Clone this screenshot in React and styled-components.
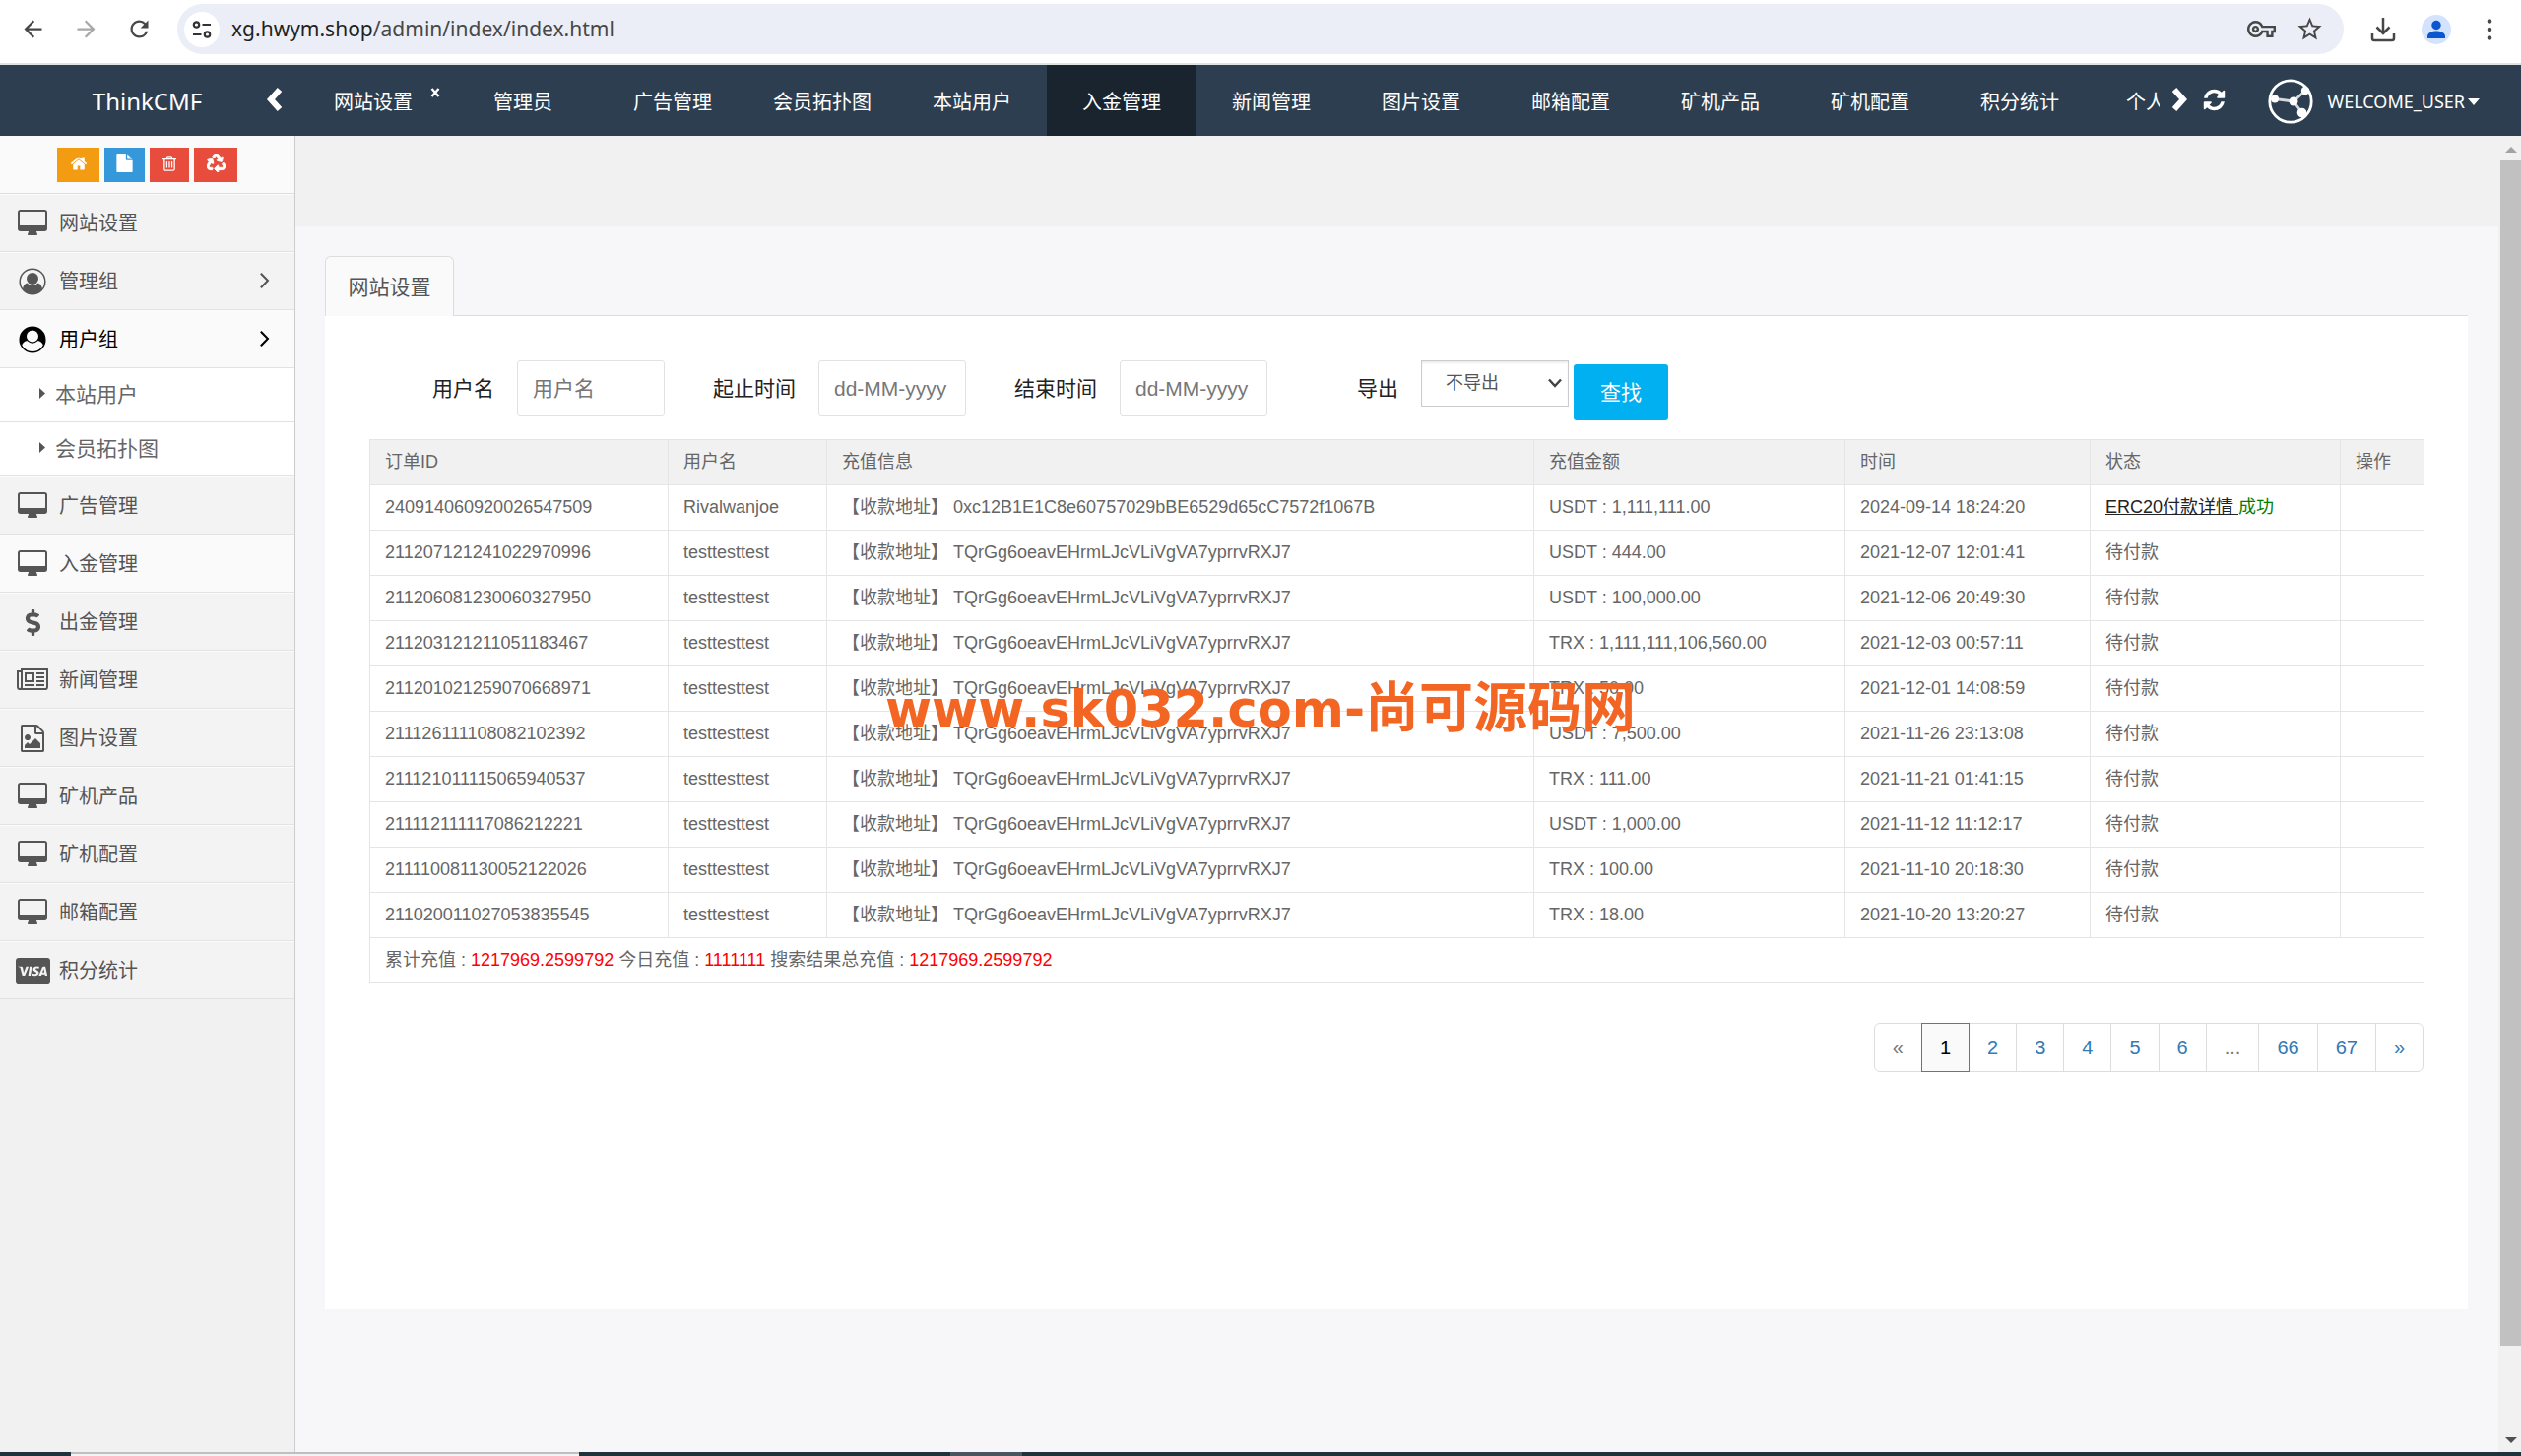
import styled, { createGlobalStyle } from "styled-components";
import { FaCcVisa, FaDollarSign, FaRecycle } from "react-icons/fa";
import { MdArrowBack, MdArrowForward, MdOutlineVpnKey, MdRefresh, MdStarBorder } from "react-icons/md";

const glyphs = {
  desktop: [
    "0 0 2048 1792",
    "M1856 992v-832q0-13-9.5-22.5t-22.5-9.5h-1600q-13 0-22.5 9.5t-9.5 22.5v832q0 13 9.5 22.5t22.5 9.5h1600q13 0 22.5-9.5t9.5-22.5zm128-832v1088q0 66-47 113t-113 47h-544q0 37 16 77.5t32 71 16 43.5q0 26-19 45t-45 19h-512q-26 0-45-19t-19-45q0-14 16-44t32-70 16-78h-544q-66 0-113-47t-47-113v-1088q0-66 47-113t113-47h1600q66 0 113 47t47 113z",
  ],
  home: [
    "0 0 1792 1792",
    "M1472 992v480q0 26-19 45t-45 19h-384v-384h-256v384h-384q-26 0-45-19t-19-45v-480q0-1 .5-3t.5-3l575-474 575 474q1 2 1 6zm223-69l-62 74q-8 9-21 11h-3q-13 0-21-7l-692-577-692 577q-12 8-24 7-13-2-21-11l-62-74q-8-10-7-23.5t11-21.5l719-599q32-26 76-26t76 26l244 204v-195q0-14 9-23t23-9h192q14 0 23 9t9 23v408l219 182q10 8 11 21.5t-7 23.5z",
  ],
  file: [
    "0 0 1792 1792",
    "M1152 512v-472q22 14 36 28l408 408q14 14 28 36h-472zm-128 32q0 40 28 68t68 28h544v1056q0 40-28 68t-68 28h-1344q-40 0-68-28t-28-68v-1600q0-40 28-68t68-28h800v544z",
  ],
  trash: [
    "0 0 1792 1792",
    "M704 736v576q0 14-9 23t-23 9h-64q-14 0-23-9t-9-23v-576q0-14 9-23t23-9h64q14 0 23 9t9 23zm256 0v576q0 14-9 23t-23 9h-64q-14 0-23-9t-9-23v-576q0-14 9-23t23-9h64q14 0 23 9t9 23zm256 0v576q0 14-9 23t-23 9h-64q-14 0-23-9t-9-23v-576q0-14 9-23t23-9h64q14 0 23 9t9 23zm128 724v-948h-896v948q0 22 7 40.5t14.5 27 10.5 8.5h832q3 0 10.5-8.5t14.5-27 7-40.5zm-672-1076h448l-48-117q-7-9-17-11h-317q-10 2-17 11zm928 32v64q0 14-9 23t-23 9h-96v948q0 83-47 143.5t-113 60.5h-832q-66 0-113-58.5t-47-141.5v-952h-96q-14 0-23-9t-9-23v-64q0-14 9-23t23-9h309l70-167q15-37 54-63t79-26h320q40 0 79 26t54 63l70 167h309q14 0 23 9t9 23z",
  ],
  refresh: [
    "0 0 1792 1792",
    "M1639 1056q0 5-1 7-64 268-268 434.5t-478 166.5q-146 0-282.5-55t-243.5-157l-129 129q-19 19-45 19t-45-19-19-45v-448q0-26 19-45t45-19h448q26 0 45 19t19 45-19 45l-137 137q71 66 161 102t187 36q134 0 250-65t186-179q11-17 53-117 8-23 30-23h192q13 0 22.5 9.5t9.5 22.5zm25-800v448q0 26-19 45t-45 19h-448q-26 0-45-19t-19-45 19-45l138-138q-148-137-349-137-134 0-250 65t-186 179q-11 17-53 117-8 23-30 23h-199q-13 0-22.5-9.5t-9.5-22.5v-7q65-268 270-434.5t480-166.5q146 0 284 55.5t245 156.5l130-129q19-19 45-19t45 19 19 45z",
  ],
  news: [
    "0 0 2048 1792",
    "M1024 512h-384v384h384v-384zm128 640v128h-640v-128h640zm0-768v640h-640v-640h640zm640 768v128h-512v-128h512zm0-256v128h-512v-128h512zm0-256v128h-512v-128h512zm0-256v128h-512v-128h512zm-1536 960v-960h-128v960q0 26 19 45t45 19 45-19 19-45zm1664 0v-1088h-1536v1088q0 33-11 64h1483q26 0 45-19t19-45zm128-1216v1216q0 80-56 136t-136 56h-1664q-80 0-136-56t-56-136v-1088h256v-128h1792z",
  ],
  image: [
    "0 0 1792 1792",
    "M1596 380q28 28 48 76t20 88v1152q0 40-28 68t-68 28h-1344q-40 0-68-28t-28-68v-1600q0-40 28-68t68-28h896q40 0 88 20t76 48zm-444-244v376h376q-10-29-22-41l-313-313q-12-12-41-22zm384 1528v-1024h-416q-40 0-68-28t-28-68v-416h-768v1536h1280zm-128-448v320h-1024v-192l192-192 128 128 384-384zm-832-192q-80 0-136-56t-56-136 56-136 136-56 136 56 56 136-56 136-136 56z",
  ],
  angle: [
    "0 0 1792 1792",
    "M1171 960q0 13-10 23l-466 466q-10 10-23 10t-23-10l-50-50q-10-10-10-23t10-23l393-393-393-393q-10-10-10-23t10-23l50-50q10-10 23-10t23 10l466 466q10 10 10 23z",
  ],
};

function Glyph({ name, size = 28 }) {
  const [box, d] = glyphs[name];
  return (
    <svg viewBox={box} height={size} fill="currentColor" aria-hidden="true">
      <path d={d} />
    </svg>
  );
}

function UserCircle({ solid }) {
  return (
    <svg viewBox="0 0 28 28" height="28" aria-hidden="true">
      {solid ? (
        <>
          <circle cx="14" cy="14" r="12.8" fill="currentColor" />
          <path d="M3 20C4 17 6 15.5 9 15h10c3 .5 5 2 6 5A12.5 12.5 0 0 1 3 20z" fill="#fafafa" />
          <circle cx="14" cy="10.5" r="6.6" fill="#fafafa" stroke="currentColor" strokeWidth="1.2" />
        </>
      ) : (
        <>
          <circle cx="14" cy="11" r="6" fill="currentColor" />
          <path d="M4 21.5c.5-3.5 2-5.5 4.5-6 1.5 1.6 3.3 2.5 5.5 2.5s4-.9 5.5-2.5c2.5.5 4 2.5 4.5 6A12 12 0 0 1 4 21.5z" fill="currentColor" />
        </>
      )}
      <circle cx="14" cy="14" r="12.8" fill="none" stroke="currentColor" strokeWidth="1.5" />
    </svg>
  );
}

function Chevron({ right }) {
  return (
    <svg viewBox="0 0 18 26" height="26" aria-hidden="true">
      <path d={right ? "M3 3l9 10-9 10" : "M15 3L6 13l9 10"} fill="none" stroke="#fff" strokeWidth="6" />
    </svg>
  );
}

const tabs = ["网站设置", "管理员", "广告管理", "会员拓扑图", "本站用户", "入金管理", "新闻管理", "图片设置", "邮箱配置", "矿机产品", "矿机配置", "积分统计"];

const menu = [
  { label: "网站设置", icon: <Glyph name="desktop" /> },
  { label: "管理组", icon: <UserCircle />, more: true },
  { label: "用户组", icon: <UserCircle solid />, more: true, open: true, children: ["本站用户", "会员拓扑图"] },
  { label: "广告管理", icon: <Glyph name="desktop" /> },
  { label: "入金管理", icon: <Glyph name="desktop" />, current: true },
  { label: "出金管理", icon: <FaDollarSign size={27} /> },
  { label: "新闻管理", icon: <Glyph name="news" /> },
  { label: "图片设置", icon: <Glyph name="image" /> },
  { label: "矿机产品", icon: <Glyph name="desktop" /> },
  { label: "矿机配置", icon: <Glyph name="desktop" /> },
  { label: "邮箱配置", icon: <Glyph name="desktop" /> },
  { label: "积分统计", icon: <FaCcVisa size={35} /> },
];

const TRON = "TQrGg6oeavEHrmLJcVLiVgVA7yprrvRXJ7";

const orders = [
  ["240914060920026547509", "Rivalwanjoe", "0xc12B1E1C8e60757029bBE6529d65cC7572f1067B", "USDT : 1,111,111.00", "2024-09-14 18:24:20", true],
  ["211207121241022970996", "testtesttest", TRON, "USDT : 444.00", "2021-12-07 12:01:41"],
  ["211206081230060327950", "testtesttest", TRON, "USDT : 100,000.00", "2021-12-06 20:49:30"],
  ["211203121211051183467", "testtesttest", TRON, "TRX : 1,111,111,106,560.00", "2021-12-03 00:57:11"],
  ["211201021259070668971", "testtesttest", TRON, "TRX : 50.00", "2021-12-01 14:08:59"],
  ["211126111108082102392", "testtesttest", TRON, "USDT : 7,500.00", "2021-11-26 23:13:08"],
  ["211121011115065940537", "testtesttest", TRON, "TRX : 111.00", "2021-11-21 01:41:15"],
  ["211112111117086212221", "testtesttest", TRON, "USDT : 1,000.00", "2021-11-12 11:12:17"],
  ["211110081130052122026", "testtesttest", TRON, "TRX : 100.00", "2021-11-10 20:18:30"],
  ["211020011027053835545", "testtesttest", TRON, "TRX : 18.00", "2021-10-20 13:20:27"],
];

function BrowserBar() {
  return (
    <Browser>
      <NavButton aria-label="后退"><MdArrowBack /></NavButton>
      <NavButton aria-label="前进" $disabled><MdArrowForward /></NavButton>
      <NavButton aria-label="刷新"><MdRefresh /></NavButton>
      <Omnibox>
        <SiteInfo aria-label="网站信息">
          <svg viewBox="0 0 20 20" width="20" height="20" fill="none" stroke="#333" strokeWidth="2.2">
            <circle cx="4.5" cy="5" r="2.7" />
            <path d="M10.5 5H19M1 15h8.5" />
            <circle cx="15.5" cy="15" r="2.7" />
          </svg>
        </SiteInfo>
        <Url>xg.hwym.shop<span>/admin/index/index.html</span></Url>
        <BarIcon aria-label="密码"><MdOutlineVpnKey size={29} /></BarIcon>
        <BarIcon aria-label="收藏"><MdStarBorder size={29} /></BarIcon>
      </Omnibox>
      <ToolIcons>
        <BarIcon aria-label="下载">
          <svg viewBox="0 0 26 26" width="26" height="26" fill="none" stroke="#474747" strokeWidth="2.5">
            <path d="M13 1v16M6.5 10.5L13 17l6.5-6.5M2 17v5q0 2 2 2h18q2 0 2-2v-5" />
          </svg>
        </BarIcon>
        <BarIcon aria-label="账号">
          <svg viewBox="0 0 30 30" width="30" height="30">
            <circle cx="15" cy="15" r="15" fill="#d3e3fd" />
            <circle cx="15" cy="10.5" r="4.7" fill="#0b57d0" />
            <path d="M6 24v-2c0-4 5-5.5 9-5.5s9 1.5 9 5.5v2z" fill="#0b57d0" />
          </svg>
        </BarIcon>
        <BarIcon aria-label="更多">
          <svg viewBox="0 0 26 26" width="26" height="26" fill="#474747">
            <circle cx="13" cy="4.5" r="2.3" />
            <circle cx="13" cy="13" r="2.3" />
            <circle cx="13" cy="21.5" r="2.3" />
          </svg>
        </BarIcon>
      </ToolIcons>
    </Browser>
  );
}

function NavBar() {
  return (
    <Nav>
      <Brand href="#">ThinkCMF</Brand>
      <Arrow aria-label="向左"><Chevron /></Arrow>
      <Tabs>
        {tabs.map((tab, i) => (
          <Tab key={tab} href="#" $active={tab === "入金管理"}>
            {tab}
            {i === 0 && (
              <Close viewBox="0 0 10 10" aria-hidden="true">
                <path d="M1.5 1l7 8M8.5 1l-7 8" stroke="#fff" strokeWidth="2.4" />
              </Close>
            )}
          </Tab>
        ))}
        <Tab href="#" $start>个人</Tab>
      </Tabs>
      <NavEnd>
        <Arrow aria-label="向右"><Chevron right /></Arrow>
        <Arrow aria-label="刷新当前页"><Glyph name="refresh" size={25} /></Arrow>
      </NavEnd>
      <Account>
        <svg viewBox="0 0 46 46" width="46" height="46" aria-hidden="true">
          <circle cx="23" cy="23" r="21.2" fill="none" stroke="#fff" strokeWidth="2.8" />
          <path d="M7 20.5L26 23M26 23L38 12M26 23L35 35" stroke="#d5d9dd" strokeWidth="2.8" />
          <circle cx="7" cy="20.5" r="4" fill="#fff" />
          <circle cx="26" cy="23" r="4.5" fill="#fff" />
          <circle cx="38" cy="12" r="4.2" fill="#fff" />
          <circle cx="34.5" cy="34.5" r="4.8" fill="#fff" />
        </svg>
        <span>WELCOME_USER</span>
        <svg viewBox="0 0 12 7" width="12" height="7" fill="#fff" aria-hidden="true">
          <path d="M0 0h12L6 7z" />
        </svg>
      </Account>
    </Nav>
  );
}

function SideBar() {
  return (
    <Side>
      <Shortcuts>
        <Shortcut aria-label="首页" $width={43} $color="#f39c12"><Glyph name="home" size={18} /></Shortcut>
        <Shortcut aria-label="文章" $width={41} $color="#3498db"><Glyph name="file" size={19} /></Shortcut>
        <Shortcut aria-label="回收站" $width={40} $color="#e74c3c"><Glyph name="trash" size={18} /></Shortcut>
        <Shortcut aria-label="清除缓存" $width={44} $color="#e74c3c"><FaRecycle size={19} stroke="#fff" strokeWidth={24} /></Shortcut>
      </Shortcuts>
      {menu.map((item) => (
        <div key={item.label}>
          <MenuItem href="#" $open={item.open} $current={item.current}>
            <MenuIcon>{item.icon}</MenuIcon>
            <MenuLabel>{item.label}</MenuLabel>
            {item.more && <Glyph name="angle" />}
          </MenuItem>
          {item.children?.map((child) => (
            <SubItem href="#" key={child}>
              <svg viewBox="0 0 6 11" width="6" height="11" fill="#555" aria-hidden="true">
                <path d="M0 0l6 5.5L0 11z" />
              </svg>
              {child}
            </SubItem>
          ))}
        </div>
      ))}
    </Side>
  );
}

function Search() {
  return (
    <Form onSubmit={(e) => e.preventDefault()}>
      <Field $width={86}>
        <label htmlFor="user">用户名</label>
        <TextBox id="user" placeholder="用户名" />
      </Field>
      <Field $width={106}>
        <label htmlFor="start">起止时间</label>
        <TextBox id="start" placeholder="dd-MM-yyyy" />
      </Field>
      <Field $width={106}>
        <label htmlFor="end">结束时间</label>
        <TextBox id="end" placeholder="dd-MM-yyyy" />
      </Field>
      <Field $width={106}>
        <label htmlFor="export">导出</label>
        <SelectWrap>
          <Select id="export">
            <option>不导出</option>
          </Select>
          <svg viewBox="0 0 14 10" width="14" height="10" fill="none" stroke="#444" strokeWidth="2.5" aria-hidden="true">
            <path d="M1 1.5l6 6.5 6-6.5" />
          </svg>
        </SelectWrap>
      </Field>
      <Submit type="submit">查找</Submit>
    </Form>
  );
}

function Orders() {
  return (
    <Table>
      <colgroup>
        <Col $width={303} />
        <Col $width={161} />
        <col />
        <Col $width={316} />
        <Col $width={249} />
        <Col $width={254} />
        <Col $width={85} />
      </colgroup>
      <thead>
        <tr>
          <th>订单ID</th>
          <th>用户名</th>
          <th>充值信息</th>
          <th>充值金额</th>
          <th>时间</th>
          <th>状态</th>
          <th>操作</th>
        </tr>
      </thead>
      <tbody>
        {orders.map(([id, user, address, amount, time, paid]) => (
          <tr key={id}>
            <td>{id}</td>
            <td>{user}</td>
            <td>【收款地址】 {address}</td>
            <td>{amount}</td>
            <td>{time}</td>
            <td>
              {paid ? (
                <>
                  <Detail href="#">ERC20付款详情&nbsp;</Detail>
                  <Success>成功</Success>
                </>
              ) : (
                "待付款"
              )}
            </td>
            <td />
          </tr>
        ))}
        <tr>
          <td colSpan={7}>
            累计充值 : <Sum>1217969.2599792</Sum> 今日充值 : <Sum>1111111</Sum> 搜索结果总充值 : <Sum>1217969.2599792</Sum>
          </td>
        </tr>
      </tbody>
    </Table>
  );
}

function App() {
  return (
    <Page>
      <GlobalStyle />
      <BrowserBar />
      <NavBar />
      <Body>
        <SideBar />
        <Content>
          <Band />
          <Wrap>
            <PanelTabs>
              <PanelTab href="#">网站设置</PanelTab>
              <PanelRule />
            </PanelTabs>
            <Panel>
              <Search />
              <Orders />
              <Pages aria-label="分页">
                <PageOff>«</PageOff>
                <PageOn aria-current="page">1</PageOn>
                {[2, 3, 4, 5, 6].map((n) => (
                  <PageLink href="#" key={n}>{n}</PageLink>
                ))}
                <PageOff>...</PageOff>
                <PageLink href="#">66</PageLink>
                <PageLink href="#">67</PageLink>
                <PageLink href="#">»</PageLink>
              </Pages>
            </Panel>
          </Wrap>
        </Content>
        <ScrollBar aria-hidden="true">
          <ScrollArrow viewBox="0 0 12 6" $color="#a3a3a3"><path d="M6 0l6 6H0z" /></ScrollArrow>
          <Thumb />
          <Rest />
          <ScrollArrow viewBox="0 0 12 6" $color="#505050"><path d="M0 0h12L6 6z" /></ScrollArrow>
        </ScrollBar>
      </Body>
      <TaskBar>
        <TaskWindow />
        <TaskItem />
      </TaskBar>
      <Watermark>
        www.sk032.com-<span>尚可源码网</span>
      </Watermark>
    </Page>
  );
}

export default App;

const GlobalStyle = createGlobalStyle`
  * {
    box-sizing: border-box;
  }
  body {
    margin: 0;
    font-family: "Liberation Sans", "Noto Sans CJK SC", sans-serif;
    font-size: 18px;
    color: #666;
  }
  button, input, select {
    font-family: inherit;
    margin: 0;
  }
  a {
    text-decoration: none;
    color: inherit;
  }
  svg {
    display: block;
    flex-shrink: 0;
  }
`;

const Page = styled.div`
  min-height: 100vh;
  display: flex;
  flex-direction: column;
  position: relative;
`;

const Browser = styled.header`
  height: 66px;
  padding: 4px 0 9px 6px;
  display: flex;
  align-items: center;
  background-color: #fff;
  border-bottom: 2px solid #dfe4e2;
`;

const NavButton = styled.button`
  width: 54px;
  padding: 0;
  display: flex;
  justify-content: center;
  border: none;
  background: none;
  font-size: 27px;
  color: ${(props) => (props.$disabled ? "#a8a8a8" : "#474747")};
`;

const Omnibox = styled.div`
  flex: 1;
  height: 51px;
  margin-left: 12px;
  padding: 0 20px 0 7px;
  display: flex;
  align-items: center;
  gap: 20px;
  border-radius: 26px;
  background-color: #ebeef7;
`;

const SiteInfo = styled.button`
  width: 36px;
  height: 36px;
  padding: 0;
  display: flex;
  align-items: center;
  justify-content: center;
  border: none;
  border-radius: 50%;
  background-color: #fff;
`;

const Url = styled.div`
  flex: 1;
  margin-left: -8px;
  padding-bottom: 2px;
  font-family: "Noto Sans", sans-serif;
  font-size: 21px;
  color: #1f1f1f;
  span {
    color: #474747;
  }
`;

const BarIcon = styled.button`
  padding: 0;
  border: none;
  background: none;
  color: #474747;
`;

const ToolIcons = styled.div`
  width: 180px;
  padding: 0 19px 0 27px;
  display: flex;
  align-items: center;
  justify-content: space-between;
`;

const Nav = styled.nav`
  height: 72px;
  display: flex;
  align-items: center;
  background-color: #2c3e50;
  color: #fff;
  font-family: "Noto Sans", "Noto Sans CJK SC", sans-serif;
`;

const Brand = styled.a`
  width: 269px;
  padding-left: 30px;
  text-align: center;
  font-size: 24px;
`;

const Arrow = styled.button`
  padding: 0 0 2px;
  border: none;
  background: none;
  color: #fff;
`;

const Tabs = styled.div`
  flex: 1;
  min-width: 0;
  margin-left: 16px;
  display: flex;
  overflow: hidden;
`;

const Tab = styled.a`
  flex: 0 0 152px;
  height: 72px;
  padding-left: ${(props) => (props.$start ? "32px" : "0")};
  display: flex;
  align-items: center;
  justify-content: ${(props) => (props.$start ? "flex-start" : "center")};
  position: relative;
  background-color: ${(props) => (props.$active ? "#1a242f" : "transparent")};
  font-size: 20px;
  white-space: nowrap;
`;

const Close = styled.svg`
  width: 10px;
  height: 10px;
  position: absolute;
  top: 23px;
  right: 8px;
`;

const NavEnd = styled.div`
  width: 110px;
  padding-left: 12px;
  display: flex;
  align-items: center;
  gap: 13px;
`;

const Account = styled.div`
  padding: 2px 42px 0 0;
  display: flex;
  align-items: center;
  font-size: 18px;
  span {
    margin: 0 3px 0 15px;
  }
`;

const Body = styled.div`
  flex: 1;
  display: flex;
`;

const Side = styled.aside`
  width: 300px;
  border-right: 1px solid #ccc;
  background-color: #f1f1f1;
`;

const Shortcuts = styled.div`
  height: 59px;
  display: flex;
  align-items: center;
  justify-content: center;
  gap: 5px;
  background-color: #fafafa;
  border-bottom: 1px solid #ddd;
`;

const Shortcut = styled.button`
  width: ${(props) => props.$width}px;
  height: 35px;
  padding: 0 0 3px;
  display: flex;
  align-items: center;
  justify-content: center;
  border: none;
  background-color: ${(props) => props.$color};
  color: #fff;
`;

const MenuItem = styled.a`
  height: 59px;
  padding: 0 16px 3px 15px;
  display: flex;
  align-items: center;
  border-top: 1px solid #fcfcfc;
  border-bottom: 1px solid #e2e2e2;
  background-color: ${(props) =>
    props.$open || props.$current ? "#fafafa" : "#f3f3f3"};
  color: ${(props) => (props.$open ? "#000" : "#555")};
`;

const MenuIcon = styled.span`
  width: 36px;
  padding-top: 4px;
  display: flex;
  justify-content: center;
`;

const MenuLabel = styled.span`
  flex: 1;
  padding-left: 9px;
  font-size: 20px;
`;

const SubItem = styled.a`
  height: 55px;
  padding: 0 0 4px 40px;
  display: flex;
  align-items: center;
  gap: 10px;
  border-bottom: 1px solid #e2e2e2;
  background-color: #fff;
  font-size: 21px;
  color: #666;
`;

const Content = styled.main`
  flex: 1;
  min-width: 0;
  background-color: #f7f7f9;
`;

const Band = styled.div`
  height: 92px;
  background-color: #f1f1f1;
`;

const Wrap = styled.div`
  padding: 30px 31px 30px 30px;
`;

const PanelTabs = styled.div`
  display: flex;
  align-items: flex-end;
`;

const PanelTab = styled.a`
  width: 131px;
  height: 61px;
  padding-bottom: 3px;
  display: flex;
  align-items: center;
  justify-content: center;
  border: 1px solid #ddd;
  border-bottom: none;
  border-radius: 6px 6px 0 0;
  background-color: #fafafa;
  font-size: 21px;
  color: #555;
`;

const PanelRule = styled.div`
  flex: 1;
  border-bottom: 1px solid #ddd;
`;

const Panel = styled.section`
  min-height: 1009px;
  padding: 45px 44px 45px 45px;
  background-color: #fff;
`;

const Form = styled.form`
  height: 80px;
  padding-left: 64px;
  display: flex;
  align-items: flex-start;
  gap: 50px;
`;

const Field = styled.div`
  display: flex;
  label {
    width: ${(props) => props.$width}px;
    padding-right: 23px;
    display: flex;
    justify-content: flex-end;
    line-height: 57px;
    font-size: 21px;
    color: #222;
    white-space: nowrap;
  }
`;

const TextBox = styled.input`
  width: 150px;
  height: 57px;
  padding: 0 15px;
  border: 1px solid #e2e2e2;
  border-radius: 3px;
  font-size: 21px;
  &::placeholder {
    color: #777;
  }
`;

const SelectWrap = styled.div`
  height: 47px;
  position: relative;
  svg {
    position: absolute;
    top: 18px;
    right: 7px;
    pointer-events: none;
  }
`;

const Select = styled.select`
  appearance: none;
  width: 150px;
  height: 47px;
  padding: 0 24px 2px;
  border: 1px solid #ccc;
  border-radius: 0;
  background-color: #fff;
  box-shadow: inset 0 2px 2px #eee;
  font-size: 18px;
  color: #555;
`;

const Submit = styled.button`
  width: 96px;
  height: 57px;
  margin: 4px 0 0 -45px;
  padding: 0 0 3px;
  border: none;
  border-radius: 3px;
  background-color: #00b0f0;
  color: #fff;
  font-size: 21px;
`;

const Table = styled.table`
  width: 100%;
  table-layout: fixed;
  border-collapse: collapse;
  th,
  td {
    height: 46px;
    padding: 0 15px 2px;
    border: 1px solid #e5e5e5;
    text-align: left;
    font-size: 18px;
    font-weight: 400;
    line-height: 26px;
    white-space: nowrap;
  }
  th {
    background-color: #f1f1f1;
  }
`;

const Col = styled.col`
  width: ${(props) => props.$width}px;
`;

const Detail = styled.a`
  color: #222;
  text-decoration: underline;
`;

const Success = styled.span`
  color: green;
`;

const Sum = styled.span`
  color: red;
`;

const Pages = styled.nav`
  margin-top: 40px;
  padding-right: 1px;
  display: flex;
  justify-content: flex-end;
`;

const PageLink = styled.a`
  height: 50px;
  margin-left: -1px;
  padding: 0 18px;
  border: 1px solid #ddd;
  background-color: #fff;
  line-height: 48px;
  font-size: 20px;
  color: #337ab7;
  &:first-child {
    border-radius: 6px 0 0 6px;
  }
  &:last-child {
    border-radius: 0 6px 6px 0;
  }
`;

const PageOff = styled(PageLink).attrs({ as: "span" })`
  color: #777;
`;

const PageOn = styled(PageLink).attrs({ as: "span" })`
  position: relative;
  border-color: #6666d8;
  background-color: #fafafa;
  color: #000;
`;

const ScrollBar = styled.div`
  width: 23px;
  padding: 11px 0 9px 2px;
  display: flex;
  flex-direction: column;
  align-items: center;
  background-color: #f1f1f1;
`;

const ScrollArrow = styled.svg`
  width: 12px;
  height: 6px;
  fill: ${(props) => props.$color};
`;

const Thumb = styled.div`
  flex: 928;
  width: 100%;
  margin-top: 8px;
  background-color: #c1c1c1;
`;

const Rest = styled.div`
  flex: 72;
`;

const TaskBar = styled.footer`
  height: 4px;
  padding-left: 72px;
  display: flex;
  background-color: #20323a;
`;

const TaskWindow = styled.div`
  width: 516px;
  margin-right: 377px;
  border-top: 2px solid #bfbfbf;
  background-color: #f3f3f3;
`;

const TaskItem = styled.div`
  width: 73px;
  background-color: #4a5560;
`;

const Watermark = styled.div`
  position: absolute;
  top: 674px;
  left: 0;
  right: 0;
  line-height: 80px;
  text-align: center;
  font-family: "DejaVu Sans", sans-serif;
  font-size: 51px;
  font-weight: 700;
  color: #f26522;
  pointer-events: none;
  span {
    font-family: "Noto Sans CJK SC", sans-serif;
    font-size: 55px;
  }
`;
